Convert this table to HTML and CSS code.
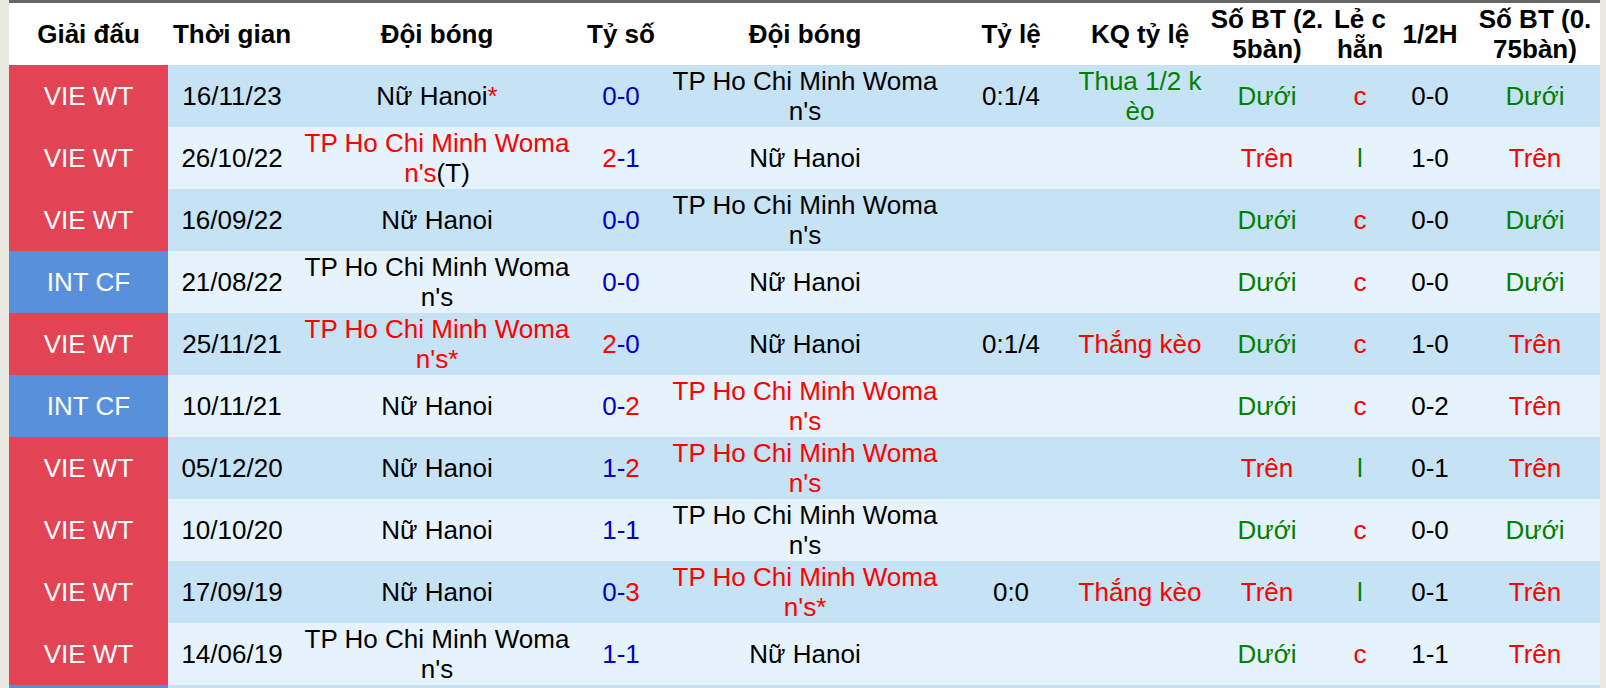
FILE: index.html
```html
<!DOCTYPE html>
<html lang="vi">
<head>
<meta charset="utf-8">
<title>Lịch sử đối đầu</title>
<link rel="stylesheet" href="styles.css">
</head>
<body>
<div class="wrap">
<table class="h2h">
<colgroup>
<col class="c-league"><col class="c-date"><col class="c-team"><col class="c-score"><col class="c-team"><col class="c-odds"><col class="c-res"><col class="c-bt"><col class="c-oe"><col class="c-half"><col class="c-bt2">
</colgroup>
<thead>
<tr>
<th>Giải đấu</th><th>Thời gian</th><th>Đội bóng</th><th>Tỷ số</th><th>Đội bóng</th><th>Tỷ lệ</th><th>KQ tỷ lệ</th><th>Số BT (2.5bàn)</th><th>Lẻ c hẵn</th><th>1/2H</th><th>Số BT (0.75bàn)</th>
</tr>
</thead>
<tbody>
<tr class="odd">
<td class="lg vie">VIE WT</td><td>16/11/23</td><td>Nữ Hanoi<span class="r">*</span></td><td class="sc">0-0</td><td>TP Ho Chi Minh Woman's</td><td>0:1/4</td><td class="g">Thua 1/2 kèo</td><td class="g">Dưới</td><td class="r">c</td><td>0-0</td><td class="g">Dưới</td>
</tr>
<tr class="even">
<td class="lg vie">VIE WT</td><td>26/10/22</td><td><span class="r">TP Ho Chi Minh Woman's</span>(T)</td><td class="sc"><span class="r">2</span>-1</td><td>Nữ Hanoi</td><td></td><td></td><td class="r">Trên</td><td class="g">l</td><td>1-0</td><td class="r">Trên</td>
</tr>
<tr class="odd">
<td class="lg vie">VIE WT</td><td>16/09/22</td><td>Nữ Hanoi</td><td class="sc">0-0</td><td>TP Ho Chi Minh Woman's</td><td></td><td></td><td class="g">Dưới</td><td class="r">c</td><td>0-0</td><td class="g">Dưới</td>
</tr>
<tr class="even">
<td class="lg int">INT CF</td><td>21/08/22</td><td>TP Ho Chi Minh Woman's</td><td class="sc">0-0</td><td>Nữ Hanoi</td><td></td><td></td><td class="g">Dưới</td><td class="r">c</td><td>0-0</td><td class="g">Dưới</td>
</tr>
<tr class="odd">
<td class="lg vie">VIE WT</td><td>25/11/21</td><td class="r">TP Ho Chi Minh Woman's*</td><td class="sc"><span class="r">2</span>-0</td><td>Nữ Hanoi</td><td>0:1/4</td><td class="r">Thắng kèo</td><td class="g">Dưới</td><td class="r">c</td><td>1-0</td><td class="r">Trên</td>
</tr>
<tr class="even">
<td class="lg int">INT CF</td><td>10/11/21</td><td>Nữ Hanoi</td><td class="sc">0-<span class="r">2</span></td><td class="r">TP Ho Chi Minh Woman's</td><td></td><td></td><td class="g">Dưới</td><td class="r">c</td><td>0-2</td><td class="r">Trên</td>
</tr>
<tr class="odd">
<td class="lg vie">VIE WT</td><td>05/12/20</td><td>Nữ Hanoi</td><td class="sc">1-<span class="r">2</span></td><td class="r">TP Ho Chi Minh Woman's</td><td></td><td></td><td class="r">Trên</td><td class="g">l</td><td>0-1</td><td class="r">Trên</td>
</tr>
<tr class="even">
<td class="lg vie">VIE WT</td><td>10/10/20</td><td>Nữ Hanoi</td><td class="sc">1-1</td><td>TP Ho Chi Minh Woman's</td><td></td><td></td><td class="g">Dưới</td><td class="r">c</td><td>0-0</td><td class="g">Dưới</td>
</tr>
<tr class="odd">
<td class="lg vie">VIE WT</td><td>17/09/19</td><td>Nữ Hanoi</td><td class="sc">0-<span class="r">3</span></td><td class="r">TP Ho Chi Minh Woman's*</td><td>0:0</td><td class="r">Thắng kèo</td><td class="r">Trên</td><td class="g">l</td><td>0-1</td><td class="r">Trên</td>
</tr>
<tr class="even">
<td class="lg vie">VIE WT</td><td>14/06/19</td><td>TP Ho Chi Minh Woman's</td><td class="sc">1-1</td><td>Nữ Hanoi</td><td></td><td></td><td class="g">Dưới</td><td class="r">c</td><td>1-1</td><td class="r">Trên</td>
</tr>
<tr class="odd">
<td class="lg int"></td><td></td><td></td><td></td><td></td><td></td><td></td><td></td><td></td><td></td><td></td>
</tr>
</tbody>
</table>
</div>
</body>
</html>
```

FILE: styles.css
```css
html, body {
  margin: 0;
  padding: 0;
  background: #e8e8e1;
}

body {
  font-family: "Liberation Sans", Arial, sans-serif;
  overflow: hidden;
}

.wrap {
  margin-left: 9px;
  width: 1591px;
  border-top: 3px solid #666666;
  background: #ffffff;
}

.h2h {
  width: 1591px;
  table-layout: fixed;
  border-collapse: collapse;
  border-spacing: 0;
  font-size: 26px;
  line-height: 30px;
  color: #000000;
}

.c-league { width: 159px; }
.c-date { width: 128px; }
.c-team { width: 282px; }
.c-score { width: 86px; }
.c-odds { width: 130px; }
.c-res { width: 128px; }
.c-bt { width: 126px; }
.c-oe { width: 60px; }
.c-half { width: 80px; }
.c-bt2 { width: 130px; }

.h2h tr {
  height: 62px;
}

.h2h th,
.h2h td {
  padding: 0 2px;
  text-align: center;
  vertical-align: middle;
  word-break: break-all;
}

.h2h th {
  font-weight: bold;
  background: #ffffff;
}

.h2h tr.odd td {
  background: #c6e2f5;
}

.h2h tr.even td {
  background: #e6f3fc;
}

.h2h tr td.lg {
  color: #ffffff;
}

.h2h tr td.vie {
  background: #e34455;
}

.h2h tr td.int {
  background: #5990db;
}

.sc {
  color: #0000cc;
}

.r {
  color: #ff0000;
}

.g {
  color: #008000;
}
```
